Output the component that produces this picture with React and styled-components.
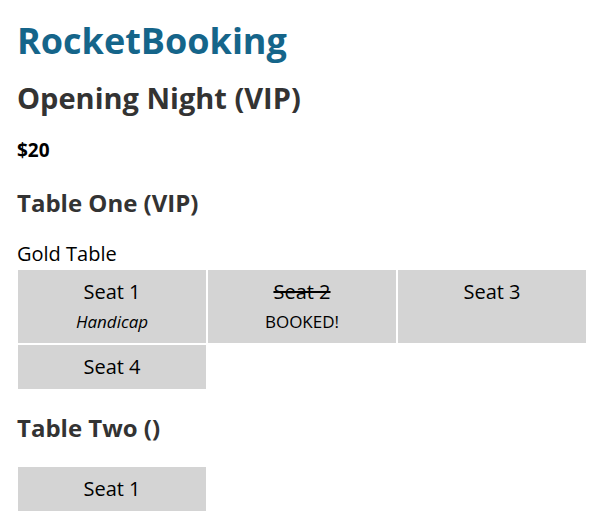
import React from 'react';
import styled, { createGlobalStyle } from 'styled-components';

const GlobalStyle = createGlobalStyle`
  body {
    margin: 0;
    background: #ffffff;
    font-family: "Open Sans", "Liberation Sans", sans-serif;
    color: #000000;
  }
`

const Page = styled.div`
  display: flex;
  flex-direction: column;
  align-items: flex-start;
  padding: 19px 17px 0;
`

const Brand = styled.h1`
  margin: 0;
  font-size: 36px;
  line-height: 44px;
  font-weight: 700;
  color: #15658a;
`

const EventTitle = styled.h2`
  margin: 17px 0 0;
  font-size: 29px;
  line-height: 35px;
  font-weight: 700;
  color: #333333;
`

const Price = styled.div`
  margin: 24px 0 3px;
  font-size: 19px;
  line-height: 23px;
  font-weight: 700;
`

const TableSection = styled.section`
  display: flex;
  flex-direction: column;
`

const TableTitle = styled.h3`
  margin: 23px 0 0;
  font-size: 24px;
  line-height: 30px;
  font-weight: 700;
  color: #333333;
`

const TableLabel = styled.div`
  margin-top: 23px;
  font-size: 20px;
  line-height: 26px;
`

const Seats = styled.div`
  display: flex;
  flex-wrap: wrap;
  width: 570px;
  margin-top: ${p => (p.$spaced ? '23px' : '2px')};
`

const Seat = styled.div`
  box-sizing: border-box;
  width: 188px;
  margin: 1px;
  padding: 9px 8px;
  background: #d4d4d4;
  text-align: center;
  font-size: 20px;
  line-height: 26px;
`

const SeatName = styled.div`
  text-decoration: ${p => (p.$booked ? 'line-through' : 'none')};
`

const SeatNote = styled.div`
  margin-top: 5px;
  font-size: 17px;
  line-height: 24px;
  font-style: ${p => (p.$italic ? 'italic' : 'normal')};
`

const tables = [
  {
    name: 'Table One (VIP)',
    label: 'Gold Table',
    seats: [
      { name: 'Seat 1', note: 'Handicap', italic: true },
      { name: 'Seat 2', note: 'BOOKED!', booked: true },
      { name: 'Seat 3' },
      { name: 'Seat 4' },
    ],
  },
  {
    name: 'Table Two ()',
    seats: [{ name: 'Seat 1' }],
  },
]

const App = () => {
  return (
    <>
      <GlobalStyle />
      <Page>
        <Brand>RocketBooking</Brand>
        <EventTitle>Opening Night (VIP)</EventTitle>
        <Price>$20</Price>
        {tables.map((table) => (
          <TableSection key={table.name}>
            <TableTitle>{table.name}</TableTitle>
            {table.label && <TableLabel>{table.label}</TableLabel>}
            <Seats $spaced={!table.label}>
              {table.seats.map((seat) => (
                <Seat key={seat.name}>
                  <SeatName $booked={seat.booked}>{seat.name}</SeatName>
                  {seat.note && (
                    <SeatNote $italic={seat.italic}>{seat.note}</SeatNote>
                  )}
                </Seat>
              ))}
            </Seats>
          </TableSection>
        ))}
      </Page>
    </>
  )
}

export default App
